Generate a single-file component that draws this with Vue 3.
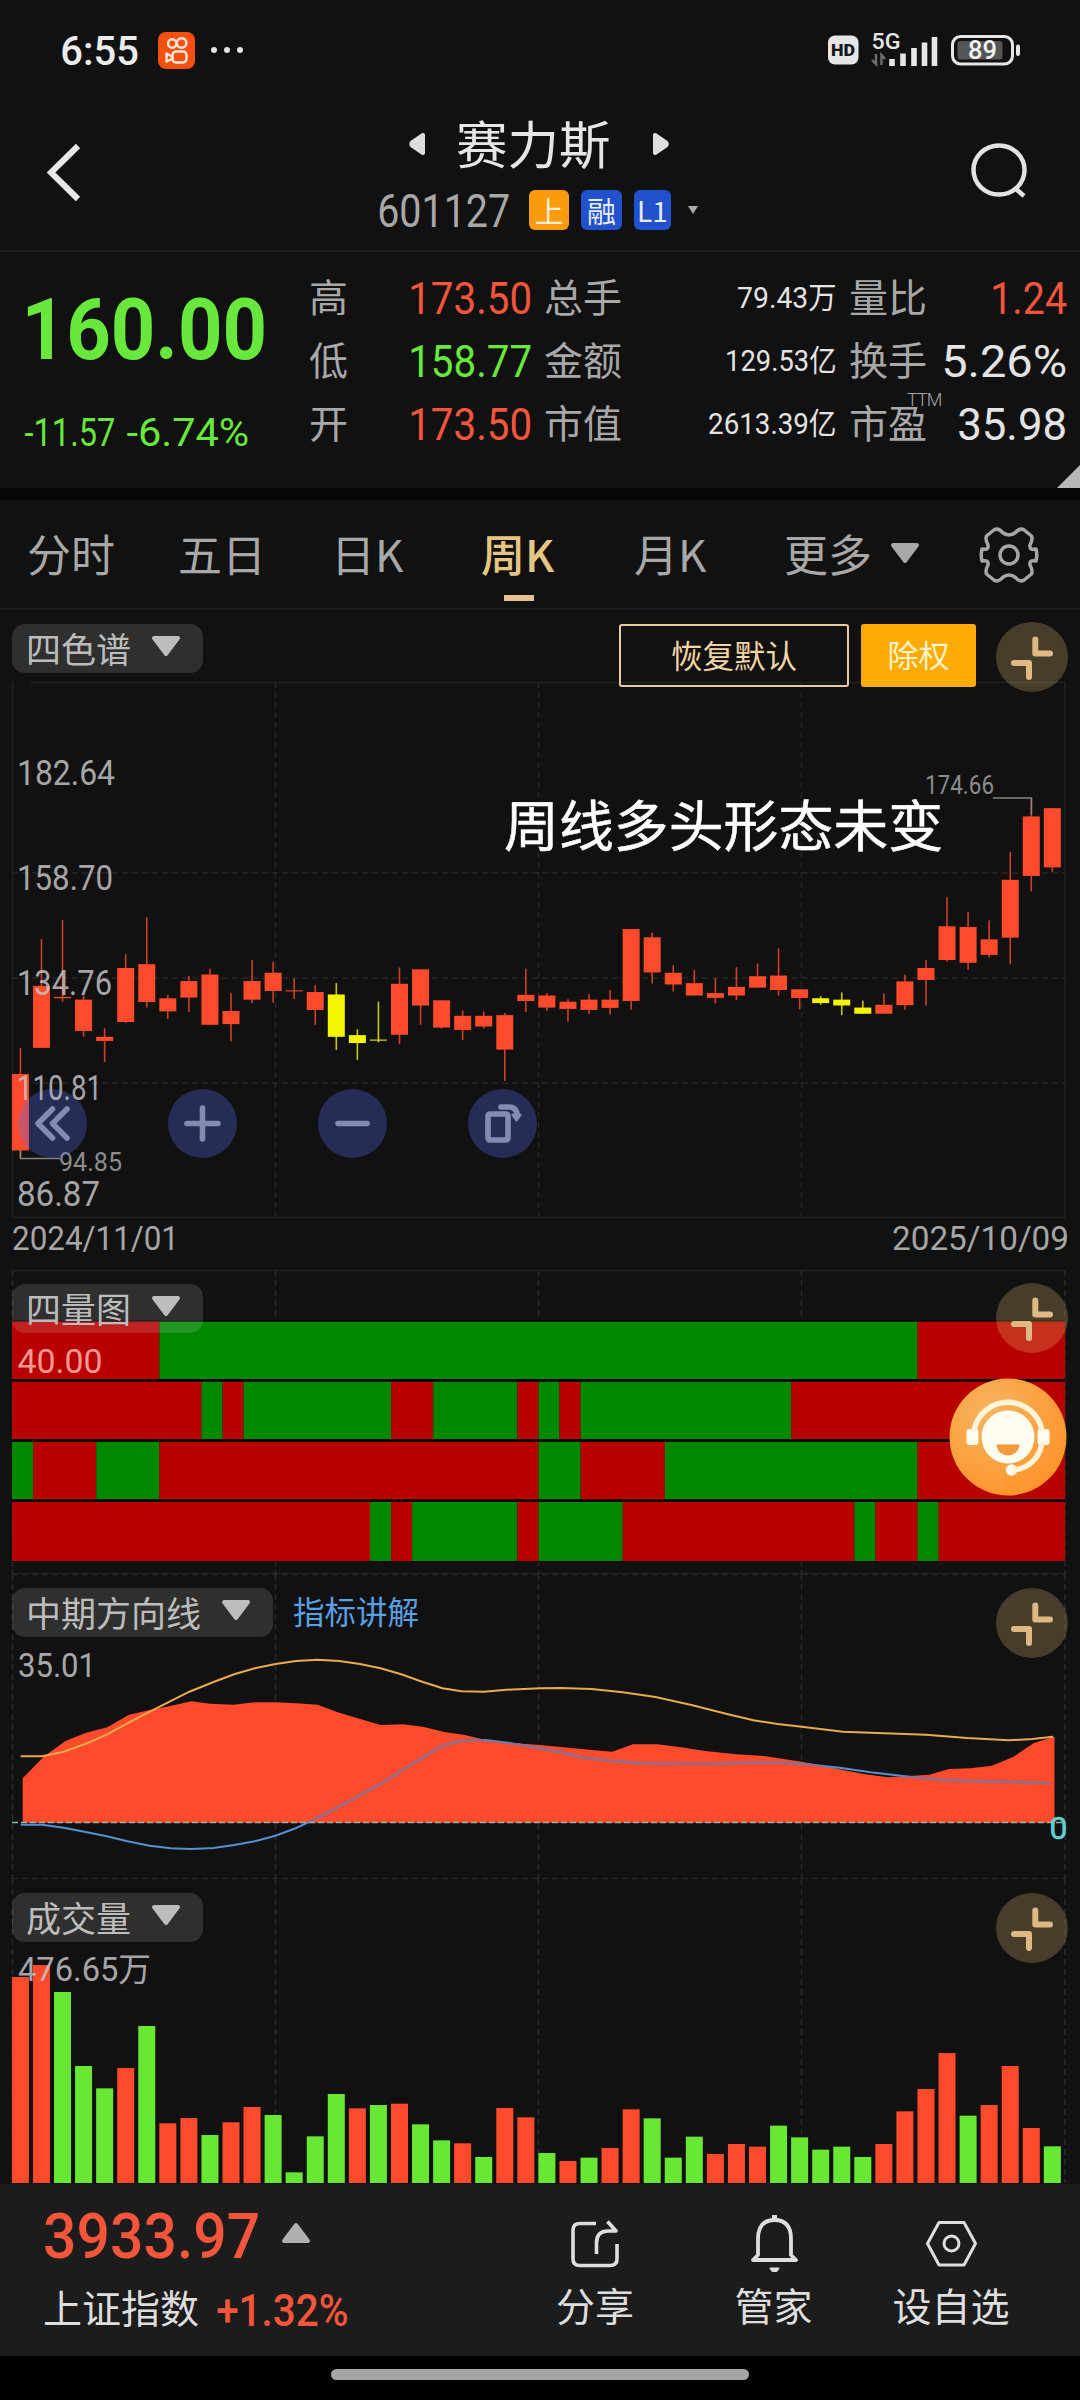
<script setup>
import { h } from 'vue'

// Numeric text squeezed to a given width and cap height
const Num = (p) => {
  const fs = p.c / 0.711
  const pad = p.pad === undefined ? 0.04 : p.pad
  return h('svg', { width: p.w, height: p.c, style: 'display:block;overflow:visible;flex:none' }, [
    h('text', {
      x: -pad * fs, y: p.c, 'font-size': fs, 'font-family': 'Roboto, "Noto Sans CJK SC", sans-serif',
      'font-weight': p.b || 400, fill: 'currentColor',
      textLength: Number(p.w) + 1.6 * pad * fs, lengthAdjust: 'spacingAndGlyphs'
    }, p.t)
  ])
}
Num.props = ['t', 'w', 'c', 'b', 'pad']

const Tri = (p) => h('svg', { width: 30, height: 22, viewBox: '0 0 30 22', style: 'display:block;flex:none' }, [
  h('path', { d: p.dir === 'up' ? 'M15 3L27 19H3Z' : 'M3 3H27L15 19Z', fill: 'currentColor', stroke: 'currentColor', 'stroke-width': 4, 'stroke-linejoin': 'round' })
])
Tri.props = ['dir']

const Collapse = () => h('svg', { width: 72, height: 72, viewBox: '-36 -36 72 72', class: 'collapse', style: 'display:block;flex:none' }, [
  h('ellipse', { rx: 36, ry: 35, fill: 'rgba(238,196,120,.25)' }),
  h('path', { d: 'M3.3-17.5V-3.5H18M-18 6H-3V20', fill: 'none', stroke: '#dfb982', 'stroke-width': 6, 'stroke-linecap': 'round', 'stroke-linejoin': 'round' })
])

const stats = [
  ['高', '173.50', 121, 'up', '总手', '79.43万', 98, '量比', '1.24', 74, 'up'],
  ['低', '158.77', 121, 'down', '金额', '129.53亿', 110, '换手', '5.26%', 123, ''],
  ['开', '173.50', 121, 'up', '市值', '2613.39亿', 127, '市盈', '35.98', 107, '']
]

const step = 21.06
const cx = (i) => 20.4 + i * step

const candles = [
  [952,1028,1250,1272],[636,772,952,952],[581,804,808,818],[800,812,903,920],[895,920,932,993],
  [680,720,877,880],[573,709,819,835],[798,808,846,868],[743,758,806,848],[722,739,885,885],
  [793,845,883,933],[697,758,812,822],[702,734,787,821],[750,785,788,810],[770,790,842,885],
  [764,797,920,958],[898,915,938,987],[818,928,931,936],[719,766,914,941],[724,724,829,885],
  [814,814,893,896],[843,859,900,929],[846,859,890,896],[851,857,957,1048],[722,798,816,848],
  [793,800,835,845],[811,818,839,876],[796,812,842,854],[784,812,836,855],[607,607,816,841],
  [618,631,733,765],[712,734,768,788],[726,764,800,800],[749,793,807,823],[718,775,800,813],
  [707,744,777,777],[663,742,784,800],[782,782,807,840],[802,808,822,827],[791,812,829,857],
  [815,835,853,853],[794,827,853,853],[740,759,828,841],[697,720,755,829],[515,599,697,702],
  [558,601,705,725],[582,637,682,690],[383,464,632,709],[228,280,453,498],[256,256,428,441]
].map((c, i) => {
  const [a, b, d, e] = c.map((v) => 720 + v / 2.9037)
  return { x: cx(i), a, b, d, e, fill: [15,16,17,38,39,40].includes(i) ? '#f4f600' : '#ff4a2b' }
})

const axis = [['182.64', 95, 785], ['158.70', 93, 890], ['134.76', 92, 995], ['110.81', 82, 1100], ['86.87', 80, 1205.5]]

// Each row alternates colour at the listed week indexes
const bands = [
  { first: 0, ends: [7,43,50] },
  { first: 0, ends: [9,10,11,18,20,24,25,26,27,37,50] },
  { first: 1, ends: [1,4,7,25,27,31,43,50] },
  { first: 0, ends: [17,18,19,24,25,29,40,41,43,44,50] }
]
const cells = bands.flatMap((r, ri) => r.ends.map((e, i) => {
  const s = i ? r.ends[i - 1] : 0
  return { x: 12 + s * step, w: (e - s) * step, y: 1321.7 + ri * 60.1, h: ri === 3 ? 59 : 57.3, fill: (i + r.first) % 2 ? '#008800' : '#b80000' }
}))

const L = (a) => a.map(([x, y]) => [x / 2.9037, 1560 + y / 3])
const R = (a) => a.map(([x, y]) => [540 + x / 2.9037, 1560 + y / 3])
const str = (a) => a.map((p) => p[0].toFixed(1) + ',' + p[1].toFixed(1)).join(' ')
const area = str([
  ...L([[66,788],[66,655],[127,590],[190,543],[250,518],[312,502],[373,465],[435,450],[495,438],[555,424],[610,431],[678,434],[740,427],[800,427],[860,430],[922,434],[985,458],[1105,495],[1170,493],[1228,500],[1290,516],[1350,525],[1410,540],[1475,548]]),
  ...R([[0,555],[150,570],[210,575],[270,553],[340,553],[410,562],[480,573],[570,583],[650,588],[760,605],[820,617],[880,630],[940,642],[1010,652],[1065,649],[1130,644],[1188,627],[1250,625],[1312,617],[1375,590],[1435,548],[1494,530],[1494,788]])
])
const yellow = str([
  ...L([[60,589],[122,589],[185,575],[245,553],[310,524],[370,490],[435,455],[550,395],[620,366],[680,343],[740,325],[800,312],[860,303],[922,299],[985,303],[1045,312],[1105,325],[1165,343],[1228,366],[1285,385],[1340,394],[1405,395],[1470,389]]),
  ...R([[0,385],[60,384],[150,387],[240,397],[335,411],[440,435],[540,461],[620,481],[690,492],[760,500],[880,515],[1000,520],[1120,524],[1240,534],[1360,541],[1430,537],[1490,530]])
])
const blue = str([
  ...L([[60,794],[122,794],[185,803],[245,815],[310,829],[370,844],[435,857],[495,865],[555,867],[620,864],[680,855],[740,844],[800,827],[860,804],[900,785],[990,737],[1100,675],[1200,610],[1270,565],[1310,549],[1350,542],[1410,540],[1480,549]]),
  ...R([[0,565],[60,577],[120,592],[200,602],[290,609],[400,611],[500,611],[600,608],[700,608],[790,614],[870,623],[960,637],[1060,649],[1170,660],[1240,663],[1360,665],[1480,670]])
])

const tops = [291,255,336,558,625,564,438,730,714,765,727,681,705,877,769,642,685,675,671,733,781,790,831,684,712,
  819,843,833,804,688,715,833,770,822,792,800,737,772,809,800,831,792,694,627,519,707,675,558,744,799]
const tone = 'RRGGGRGRRGRRGGGGRGRGGRGRRGRGRRGGGRRRGGGGGRRRRGRRRG'
const bars = tops.map((t, i) => ({ x: cx(i) - 8.5, y: 1880 + t / 3, h: 303 - t / 3, fill: tone[i] === 'R' ? '#ff4a2b' : '#68e834' }))
const vlines = [12.5, 275.5, 538.5, 801.5, 1065]
</script>

<template>
  <div class="app">
    <div class="status">
      <Num class="clock" t="6:55" w="76" c="29" b="500" />
      <svg class="kwai" width="37" height="37" viewBox="0 0 37 37">
        <rect width="37" height="37" rx="8" fill="#f5500f" />
        <g fill="none" stroke="#ffe9dc" stroke-width="2.4"><circle cx="14.2" cy="11.5" r="4.2" /><circle cx="23.6" cy="11" r="4.8" /><rect x="14.5" y="19.5" width="14" height="11" rx="3.6" /><path d="M14 24.5L8.5 21.5V29.5L14 26.8" stroke-linejoin="round" /></g>
      </svg>
      <svg class="dots" width="34" height="8"><g fill="#e4e4e4"><circle cx="4" cy="4" r="3" /><circle cx="17" cy="4" r="3" /><circle cx="30" cy="4" r="3" /></g></svg>
      <svg class="sig" width="194" height="40" viewBox="828 30 194 40">
        <rect x="828" y="35.5" width="30.5" height="29" rx="7" fill="#e6e6e6" />
        <text x="831" y="56" font-family="Roboto, sans-serif" font-size="16" font-weight="900" textLength="24" lengthAdjust="spacingAndGlyphs" fill="#161616">HD</text>
        <text x="871.5" y="48.500" font-family="Roboto, sans-serif" font-size="21.500" font-weight="500" textLength="29" lengthAdjust="spacingAndGlyphs" fill="#e6e6e6">5G</text>
        <path d="M876 54V64L872 60M881.500 65V55L885 59" fill="none" stroke="#707070" stroke-width="2.4" />
        <path d="M892 66V59M903 66V53.500M914 66V48M924.500 66V42.500M934.500 66V37" stroke="#e6e6e6" stroke-width="5.600" />
        <rect x="952.500" y="36.500" width="60" height="27.500" rx="8" fill="none" stroke="#e6e6e6" stroke-width="3" />
        <rect x="957.500" y="41" width="45" height="18.500" rx="3" fill="#555" />
        <path d="M1018 46.500V54" stroke="#e6e6e6" stroke-width="4" stroke-linecap="round" />
        <text x="968" y="59" font-family="Roboto, sans-serif" font-size="25" font-weight="500" textLength="29" lengthAdjust="spacingAndGlyphs" fill="#f2f2f2">89</text>
      </svg>
    </div>

    <header class="head">
      <svg class="back" width="36" height="60" viewBox="0 0 36 60"><path d="M32 3L5 29.500L32 56" fill="none" stroke="#e8e8e8" stroke-width="6" /></svg>
      <div class="mid">
        <div class="name">
          <svg width="18" height="24"><path d="M15 3V21L4 13.500Q2.500 12 4 10.500Z" fill="#dedede" stroke="#dedede" stroke-width="4" stroke-linejoin="round" /></svg>
          <span>赛力斯</span>
          <svg width="18" height="24"><path d="M3 3V21L14 13.500Q15.500 12 14 10.500Z" fill="#dedede" stroke="#dedede" stroke-width="4" stroke-linejoin="round" /></svg>
        </div>
        <div class="code">
          <Num t="601127" w="130" c="33" />
          <i class="tag orange">上</i><i class="tag">融</i><i class="tag l1">L1</i>
          <svg width="10" height="8"><path d="M0 0H10L5 8Z" fill="#aaa" /></svg>
        </div>
      </div>
      <svg class="search" width="60" height="60" viewBox="0 0 60 60"><ellipse cx="29" cy="28" rx="25.500" ry="24.500" fill="none" stroke="#e2e2e2" stroke-width="4.500" /><path d="M45 46L54 54" stroke="#e2e2e2" stroke-width="4.500" /></svg>
    </header>

    <section class="quote">
      <div class="price down">
        <Num t="160.00" w="240" c="60" b="700" />
        <div class="chg"><Num t="-11.57" w="90" c="28" pad="0.01" /><Num t="-6.74%" w="122" c="28" pad="0.01" /></div>
      </div>
      <div class="stats">
        <div v-for="s in stats" :key="s[0]" class="srow">
          <div class="cell c1"><span>{{ s[0] }}</span><Num :class="s[3]" :t="s[1]" :w="s[2]" c="32" /></div>
          <div class="cell c2"><span>{{ s[4] }}</span><Num class="white small" :t="s[5]" :w="s[6]" c="21" pad="0.03" /></div>
          <div class="cell c3"><span>{{ s[7] }}<sup v-if="s[7] === '市盈'">TTM</sup></span><Num :class="s[10] || 'white'" :t="s[8]" :w="s[9]" c="32" /></div>
        </div>
      </div>
      <i class="corner"></i>
    </section>

    <nav class="tabs">
      <span class="t1">分时</span><span class="t2">五日</span><span class="t3">日K</span><span class="t4 on">周K</span><span class="t5">月K</span><span class="t6">更多 <Tri /></span>
      <svg class="gear" width="62" height="58" viewBox="-31 -29 62 58" fill="none" stroke="#a6a6a6" stroke-width="3.500" stroke-linejoin="round">
        <path d="M-14.500-25.500Q-10-27-6.500-22.500Q0-17.500 6.500-22.500Q10-27 14.500-25.500L22.500-19Q24-15.500 21-10Q20-4.500 27-6Q28.500 0 27 6Q20 4.500 21 10Q24 15.500 22.500 19L14.500 25.500Q10 27 6.500 22.500Q0 17.500-6.500 22.500Q-10 27-14.500 25.500L-22.500 19Q-24 15.500-21 10Q-20 4.500-27 6Q-28.500 0-27-6Q-20-4.500-21-10Q-24-15.500-22.500-19Z" />
        <circle r="9" />
      </svg>
    </nav>

    <section class="panel main">
      <svg width="1080" height="651" viewBox="0 610 1080 651">
        <g stroke="#2a2a2b" stroke-width="1.500"><path d="M30 682.500H1065M12 1217.500H1065M12.500 682V1217M1065 682V1217" stroke="#202021" />
          <path d="M275.500 682V1217M538.500 682V1217M801.500 682V1217M12 873H1065M12 978H1065M12 1083H1065" stroke="#262627" stroke-dasharray="6 4" /></g>
        <g v-for="(c, i) in candles" :key="i" :fill="c.fill">
          <rect :x="c.x - 0.8" :y="c.a" width="1.600" :height="c.e - c.a" opacity="0.8" />
          <rect :x="c.x - 8.5" :y="c.b" width="17" :height="c.d - c.b" />
        </g>
        <path d="M993 798H1031.500V815M20.500 1150V1158.500H60" fill="none" stroke="#858585" stroke-width="1.500" />
        <g font-family="Roboto, sans-serif" fill="#a6a6a6">
          <text x="925" y="794" font-size="25" textLength="69" lengthAdjust="spacingAndGlyphs" fill="#8c8c8c">174.66</text>
          <text x="59" y="1171" font-size="25" textLength="63" lengthAdjust="spacingAndGlyphs" fill="#8c8c8c">94.85</text>
          <text x="12" y="1250" font-size="34" textLength="167" lengthAdjust="spacingAndGlyphs">2024/11/01</text>
          <text x="892" y="1250" font-size="34" textLength="177" lengthAdjust="spacingAndGlyphs">2025/10/09</text>
        </g>
        <text x="504" y="846" font-family="Noto Sans CJK SC, sans-serif" font-size="54.900" fill="#fff" stroke="#fff" stroke-width=".5">周线多头形态未变</text>
        <g transform="translate(0 1123.500)" fill="rgba(87,110,247,.3)"><circle cx="52.500" r="34.500" /><circle cx="202.500" r="34.500" /><circle cx="352.500" r="34.500" /><circle cx="502.500" r="34.500" /></g>
        <g fill="none" stroke="#858bb0" stroke-width="5.600" stroke-linecap="round" stroke-linejoin="round">
          <path d="M52.500 1109L38 1123.500L52.500 1138M67 1109L52.500 1123.500L67 1138M187 1123.500H218M202.500 1108V1139M338 1123.500H367" />
          <rect x="488" y="1114" width="20" height="26" rx="2" /><path d="M501 1107H509Q516 1107 517 1114" />
          <path d="M513 1115H520L516.500 1120Z" fill="#858bb0" stroke-width="3" />
        </g>
        <text v-for="a in axis" :key="a[0]" x="17" :y="a[2]" font-family="Roboto, sans-serif" font-size="34.500" :textLength="a[1] + 3" lengthAdjust="spacingAndGlyphs" fill="#c8c8c8" fill-opacity=".84">{{ a[0] }}</text>
      </svg>
      <div class="bar">
        <button class="chip">四色谱<Tri /></button>
        <button class="restore">恢复默认</button><button class="rights">除权</button><Collapse />
      </div>
    </section>

    <section class="panel four">
      <svg width="1080" height="313" viewBox="0 1261 1080 313">
        <path d="M12 1270.500H1065M12 1573.500H1065" stroke="#222" stroke-width="1.500" />
        <path v-for="x in vlines" :key="x" :d="`M${x} 1270V1574`" stroke="#29292a" stroke-width="1.500" stroke-dasharray="6 4" />
        <rect x="12" y="1320" width="1053" height="242" fill="#0b0202" />
        <rect v-for="(c, i) in cells" :key="i" :x="c.x" :y="c.y" :width="c.w" :height="c.h" :fill="c.fill" />
        <text x="17.500" y="1373" font-family="Roboto, sans-serif" font-size="34" textLength="85" lengthAdjust="spacingAndGlyphs" fill="#ff9891">40.00</text>
      </svg>
      <div class="bar"><button class="chip">四量图<Tri /></button><Collapse /></div>
      <svg class="service" width="118" height="118" viewBox="-59 -59 118 118">
        <defs><radialGradient id="sv" cx=".35" cy=".3" r=".75"><stop offset="0" stop-color="#f5b560" /><stop offset="1" stop-color="#ff942b" /></radialGradient></defs>
        <circle r="58.500" fill="url(#sv)" />
        <g fill="#fffdf0"><circle r="26.500" /><rect x="-41.500" y="-8" width="12" height="16" rx="3" /><rect x="29.500" y="-8" width="12" height="16" rx="3" /><circle cx="3.500" cy="33" r="5.800" /></g>
        <path d="M-34-6A34.500 34.500 0 0 1 34-6M34 4C33 19 22 31 6 33" fill="none" stroke="#fff4da" stroke-width="5.500" />
        <path d="M-11.500 7.500H11.500C10.500 22-10.500 22-11.500 7.500Z" fill="#f89a3c" />
      </svg>
    </section>

    <section class="panel direction">
      <svg width="1080" height="305" viewBox="0 1574 1080 305">
        <path d="M12 1574.500H1065M12 1878.500H1065" stroke="#262627" stroke-width="1.500" stroke-dasharray="6 4" />
        <path v-for="x in vlines" :key="x" :d="`M${x} 1574V1879`" stroke="#29292a" stroke-width="1.500" stroke-dasharray="6 4" />
        <polygon :points="area" fill="#ff4a2b" />
        <polyline :points="blue" fill="none" stroke="#5590cf" stroke-width="2" />
        <polyline :points="blue" fill="none" stroke="#9a6a82" stroke-width="3" clip-path="url(#inArea)" />
        <polyline :points="yellow" fill="none" stroke="#e9ab4e" stroke-width="2" />
        <clipPath id="inArea"><polygon :points="area" /></clipPath>
        <path d="M12 1822.500H1062" stroke="#96b8ae" stroke-width="1.600" stroke-dasharray="6 3" />
        <text x="18" y="1677" font-family="Roboto, sans-serif" font-size="33.500" textLength="78" lengthAdjust="spacingAndGlyphs" fill="#a8a8a8">35.01</text>
        <text x="1049.5" y="1839" font-family="Roboto, sans-serif" font-size="32" fill="#5fcfd0" stroke="#5fcfd0" stroke-width=".6">0</text>
      </svg>
      <div class="bar"><button class="chip">中期方向线<Tri /></button><a class="link">指标讲解</a><Collapse /></div>
    </section>

    <section class="panel volume">
      <svg width="1080" height="305" viewBox="0 1879 1080 305">
        <path v-for="x in vlines" :key="x" :d="`M${x} 1879V2183`" stroke="#29292a" stroke-width="1.500" stroke-dasharray="6 4" />
        <rect v-for="(b, i) in bars" :key="i" :x="b.x" :y="b.y" width="17" :height="b.h" :fill="b.fill" />
        <text x="18" y="1981" font-family="Roboto, Noto Sans CJK SC, sans-serif" font-size="33.500" textLength="133" lengthAdjust="spacingAndGlyphs" fill="#c8c8c8" fill-opacity=".84">476.65万</text>
      </svg>
      <div class="bar"><button class="chip">成交量<Tri /></button><Collapse /></div>
    </section>

    <footer class="foot">
      <div class="index">
        <div class="i1"><Num class="up" t="3933.97" w="214" c="45" b="500" pad="0.03" /><Tri dir="up" /></div>
        <div class="i2"><span>上证指数</span><Num class="up" t="+1.32%" w="131" c="31" b="500" pad="0.02" /></div>
      </div>
      <div class="act a1">
        <svg width="60" height="62" viewBox="566 2210 60 62" fill="none" stroke="#dedede" stroke-width="3.600"><path d="M597 2223.500H581Q574 2223.500 574 2230V2259Q574 2265.500 581 2265.500H611Q618 2265.500 618 2259V2244" /><path d="M597.500 2254V2243Q597.500 2231 609 2231H617L608.500 2221.500" stroke-linejoin="round" /></svg>
        <span>分享</span>
      </div>
      <div class="act a2">
        <svg width="60" height="62" viewBox="744 2210 60 62" fill="none" stroke="#dedede" stroke-width="3.800" stroke-linejoin="round"><path d="M758 2255V2239Q758 2220 774.500 2220Q791 2220 791 2239V2255L796 2260H753L758 2255Z" /><path d="M774.500 2219V2215" stroke-width="5" /><path d="M770.500 2268.500H778.500L776.500 2271H772.500Z" fill="#dedede" stroke-width="2" /></svg>
        <span>管家</span>
      </div>
      <div class="act a3">
        <svg width="60" height="62" viewBox="921 2210 60 62" fill="none" stroke="#dedede" stroke-width="3"><path d="M939 2222.500H964L975.500 2243.500L964 2265H939L927.500 2243.500Z" stroke-linejoin="round" /><ellipse cx="951.500" cy="2243.500" rx="7.500" ry="7.500" /></svg>
        <span>设自选</span>
      </div>
    </footer>
    <div class="home"><i></i></div>
  </div>
</template>

<style>
body { margin: 0; background: #111; }
</style>

<style scoped>
.app { width: 1080px; height: 2400px; overflow: hidden; background: #111; color: #a8a8a8; font-family: "Noto Sans CJK SC", sans-serif; display: flex; flex-direction: column; }
.app > * { flex: none; box-sizing: border-box; }
svg { display: block; flex: none; }
i { font-style: normal; }
button { border: 0; margin: 0; padding: 0; font-family: inherit; color: inherit; background: none; box-sizing: border-box; }
.up { color: #f4553b; }
.down { color: #68e83c; }
.white { color: #e4e4e4; }

.status { height: 100px; display: flex; align-items: center; padding-left: 62px; }
.clock { color: #ececec; }
.kwai { margin-left: 20px; }
.dots { margin-left: 15px; }
.sig { margin-left: 584px; }

.head { height: 152px; display: flex; align-items: flex-start; border-bottom: 2px solid #1d1d1d; }
.back { margin: 43px 0 0 46px; }
.mid { margin-left: 297px; width: 319px; }
.name { margin-top: 9px; height: 69px; padding-left: 29px; display: flex; align-items: center; color: #e6e6e6; }
.name span { font-size: 51.5px; line-height: 69px; margin: -5px 41px 0 30px; width: 155px; }
.code { margin-top: 12px; height: 40px; display: flex; align-items: center; }
.tag { width: 41px; height: 40px; line-height: 40px; border-radius: 6px; background: #2152cb; color: #e8edf8; font-size: 29px; text-align: center; margin-left: 12px; }
.tag.orange { background: #fb9a0c; color: #fff0d4; margin-left: 20px; }
.tag.l1 { width: 38px; font-size: 28px; }
.code svg:last-child { margin-left: 17px; }
.search { margin: 42px 0 0 272px; }

.quote { height: 248px; display: flex; position: relative; border-bottom: 12px solid #070707; }
.price { width: 310px; padding: 47px 0 0 25px; box-sizing: border-box; }
.chg { display: flex; gap: 12px; margin-top: 59px; }
.stats { padding-top: 14px; }
.srow { height: 63px; display: flex; }
.cell { display: flex; align-items: center; justify-content: space-between; box-sizing: border-box; font-size: 39px; line-height: 63px; }
.cell span { position: relative; top: -2px; left: -1px; }
.c1 { width: 235px; padding-right: 14px; }
.c2 { width: 305px; padding-right: 14px; }
.c3 { width: 216px; }
sup { position: absolute; left: 58px; top: 1px; font: 300 18px/18px Roboto, sans-serif; letter-spacing: -1px; }
.corner { position: absolute; right: 0; bottom: 0; border-left: 23px solid transparent; border-bottom: 23px solid #b8b8b8; }

.tabs { height: 110px; display: flex; font-size: 44px; line-height: 106px; white-space: nowrap; border-bottom: 2px solid #1e1e20; padding-left: 27px; }
.tabs span { display: block; height: 106px; box-sizing: border-box; }
.t1 { width: 151px; } .t2 { width: 153px; } .t3 { width: 150px; } .t4 { width: 153px; } .t5 { width: 150px; }
.tabs .t6 { width: 194px; display: flex; align-items: center; gap: 18px; color: #a8a8a8; }
.tabs .on { color: #e6c584; font-weight: 500; background: linear-gradient(#e6c190, #e6c190) 23px 95px / 30px 6px no-repeat; }
.gear { margin-top: 26px; }

.panel { display: grid; }
.panel > * { grid-area: 1 / 1; }
.bar { display: flex; align-items: flex-start; padding: 14px 12px 0 12px; }
.four .bar { padding-top: 23px; }
.chip { width: 191px; height: 49px; line-height: 43px; border-radius: 13px; background: rgba(255,255,255,.13); color: #bdbdbd; font-size: 35px; padding: 0 22px 3px 14px; display: flex; align-items: center; justify-content: space-between; }
.direction .chip { width: 261px; }
.chip svg { margin-top: -2px; }
.bar :deep(.collapse), .collapse { margin-left: auto; margin-top: -2px; }
.main .collapse { margin-top: -3px; }
.direction .collapse, .volume .collapse { margin-top: -1px; }
.restore { width: 230px; height: 63px; border: 2px solid #e9c9a2; border-radius: 3px; font-size: 31.5px; line-height: 54px; padding-bottom: 3px; color: #f2d5a4; margin-left: 416px; }
.rights { width: 115px; height: 63px; border-radius: 3px; background: #ffaa05; color: #fff3c8; font-size: 31px; line-height: 58px; padding-bottom: 3px; margin-left: 12px; }
.link { color: #5a9fe2; font-size: 31.5px; line-height: 45px; margin-left: 20px; }
.service { margin: 117px 0 0 949px; }

.foot { height: 172px; background: #1c1c1c; display: flex; color: #dedede; font-size: 39px; }
.index { width: 514px; padding: 29px 0 0 45px; box-sizing: border-box; }
.i1 { display: flex; gap: 22px; color: #b0b0b0; }
.i1 svg:last-child { margin-top: 9px; }
.i2 { display: flex; align-items: center; gap: 18px; margin-top: 17px; margin-left: -2px; line-height: 58px; height: 62px; }
.i2 svg { margin-top: 9px; }
.act { display: flex; flex-direction: column; align-items: center; padding-top: 26px; box-sizing: border-box; }
.act span { line-height: 58px; margin-top: 3px; white-space: nowrap; }
.a1 { width: 162px; } .a2 { width: 195px; } .a3 { width: 160px; }
.home { height: 44px; background: #000; display: flex; justify-content: center; padding-top: 13px; }
.home i { width: 418px; height: 11px; border-radius: 6px; background: #a5a5a5; }
</style>
